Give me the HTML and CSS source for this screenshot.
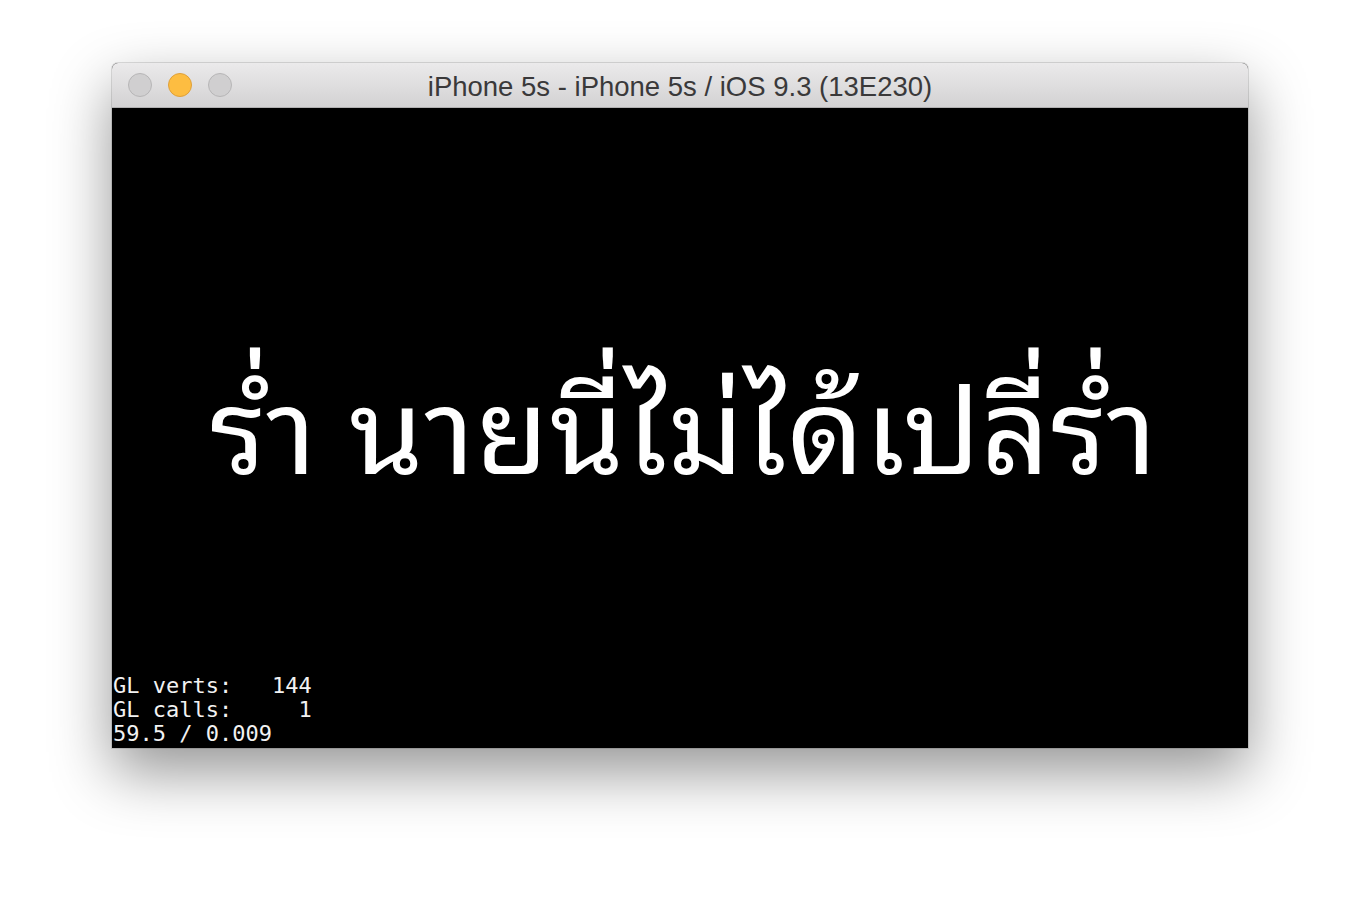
FILE: index.html
```html
<!DOCTYPE html>
<html lang="th">
<head>
<meta charset="utf-8">
<title>iPhone 5s - iPhone 5s / iOS 9.3 (13E230)</title>
<link rel="stylesheet" href="styles.css">
</head>
<body>
<div class="window">
  <div class="titlebar">
    <div class="lights">
      <span class="light light-gray"></span>
      <span class="light light-yellow"></span>
      <span class="light light-gray"></span>
    </div>
    <div class="title">iPhone 5s - iPhone 5s / iOS 9.3 (13E230)</div>
  </div>
  <div class="screen">
    <div class="thai">ร่ำ นายนี่ไม่ได้เปลี่ร่ำ</div>
    <pre class="stats">GL verts:   144
GL calls:     1
59.5 / 0.009</pre>
  </div>
</div>
</body>
</html>
```

FILE: styles.css
```css
html, body {
  margin: 0;
  padding: 0;
  background: #ffffff;
}
body {
  width: 1360px;
  height: 908px;
  overflow: hidden;
}
.window {
  width: 1136px;
  margin: 63px 0 0 112px;
  border-radius: 6px 6px 0 0;
  box-shadow: 0 24px 60px rgba(0, 0, 0, 0.42), 0 0 0 1px rgba(0, 0, 0, 0.12);
  background: #000;
}
.titlebar {
  height: 44px;
  border-radius: 6px 6px 0 0;
  background: linear-gradient(#ebeaeb, #d3d2d3);
  border-bottom: 1px solid #b1b0b1;
  display: grid;
  grid-template-columns: 1fr;
  align-items: center;
}
.lights, .title {
  grid-row: 1;
  grid-column: 1;
}
.lights {
  display: flex;
  gap: 16px;
  padding-left: 16px;
  align-items: center;
}
.light {
  width: 22px;
  height: 22px;
  border-radius: 50%;
  display: block;
}
.light-gray {
  background: #d0cfd0;
  border: 1px solid #b7b6b7;
}
.light-yellow {
  background: #fdbd41;
  border: 1px solid #dfa03a;
}
.title {
  text-align: center;
  font-family: "Liberation Sans", Arial, sans-serif;
  font-size: 27.5px;
  color: #3a393a;
  padding-top: 4px;
}
.screen {
  height: 640px;
  background: #000;
  display: grid;
  grid-template-columns: 1fr;
  grid-template-rows: 1fr;
}
.thai, .stats {
  grid-row: 1;
  grid-column: 1;
}
.thai {
  align-self: center;
  justify-self: center;
  color: #fff;
  font-family: "Noto Sans Thai Looped", "Noto Sans Thai", sans-serif;
  font-size: 119px;
  font-weight: 400;
  letter-spacing: 1px;
  line-height: 1;
  padding: 0 0 16px 8px;
}
.stats {
  align-self: end;
  justify-self: start;
  margin: 0 0 2px 1px;
  color: #f2f2f2;
  font-family: "DejaVu Sans Mono", monospace;
  font-size: 22px;
  line-height: 24px;
}
```
